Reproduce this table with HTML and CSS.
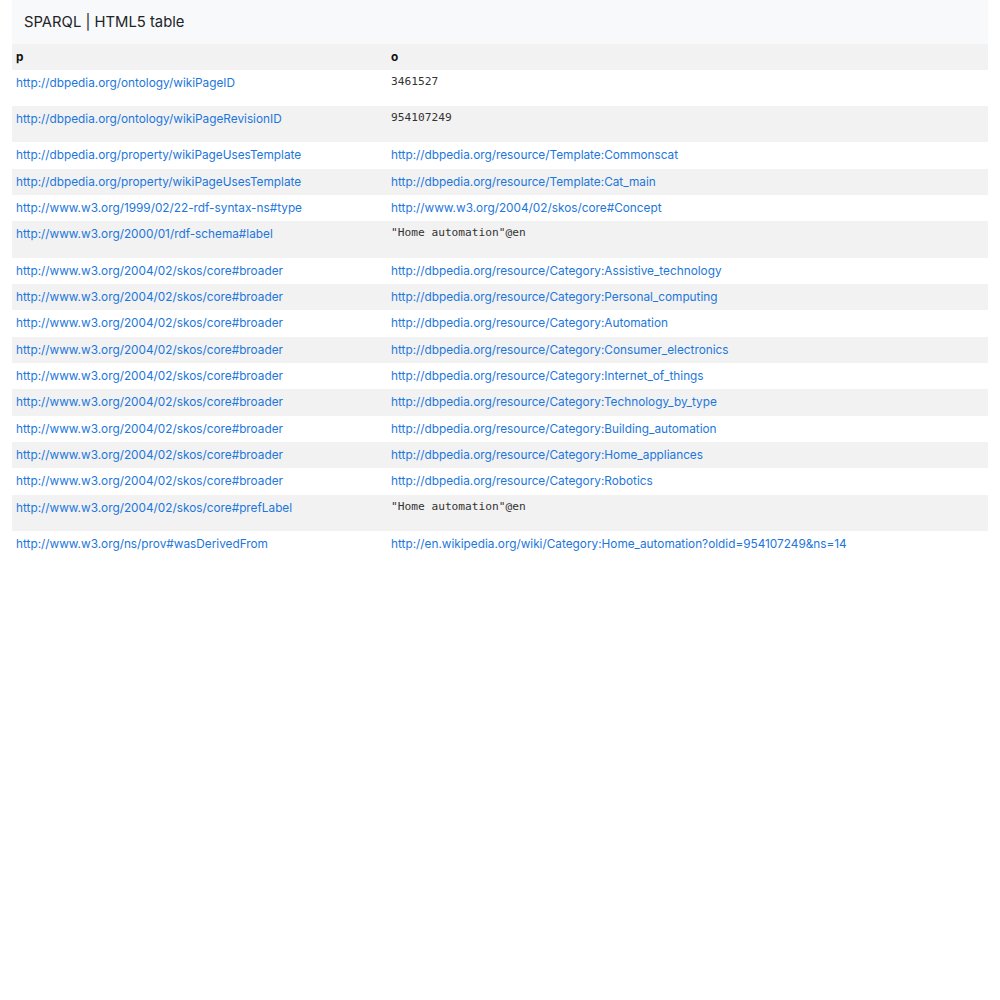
FILE: index.html
```html
<!DOCTYPE html>
<html lang="en">
<head>
  <meta charset="UTF-8" />
  <title>SPARQL | HTML5 table</title>
  <link rel="stylesheet" href="styles.css">
</head>
<body>
  <div class="container">
    <header class="title-bar">
      <h1>SPARQL | HTML5 table</h1>
    </header>
    <table class="results">
      <thead>
        <tr><th class="col-p">p</th><th>o</th></tr>
      </thead>
      <tbody>
        <tr><td><a href="#">http://dbpedia.org/ontology/wikiPageID</a></td><td><pre>3461527</pre></td></tr>
        <tr><td><a href="#">http://dbpedia.org/ontology/wikiPageRevisionID</a></td><td><pre>954107249</pre></td></tr>
        <tr><td><a href="#">http://dbpedia.org/property/wikiPageUsesTemplate</a></td><td><a href="#">http://dbpedia.org/resource/Template:Commonscat</a></td></tr>
        <tr><td><a href="#">http://dbpedia.org/property/wikiPageUsesTemplate</a></td><td><a href="#">http://dbpedia.org/resource/Template:Cat_main</a></td></tr>
        <tr><td><a href="#">http://www.w3.org/1999/02/22-rdf-syntax-ns#type</a></td><td><a href="#">http://www.w3.org/2004/02/skos/core#Concept</a></td></tr>
        <tr><td><a href="#">http://www.w3.org/2000/01/rdf-schema#label</a></td><td><pre>"Home automation"@en</pre></td></tr>
        <tr><td><a href="#">http://www.w3.org/2004/02/skos/core#broader</a></td><td><a href="#">http://dbpedia.org/resource/Category:Assistive_technology</a></td></tr>
        <tr><td><a href="#">http://www.w3.org/2004/02/skos/core#broader</a></td><td><a href="#">http://dbpedia.org/resource/Category:Personal_computing</a></td></tr>
        <tr><td><a href="#">http://www.w3.org/2004/02/skos/core#broader</a></td><td><a href="#">http://dbpedia.org/resource/Category:Automation</a></td></tr>
        <tr><td><a href="#">http://www.w3.org/2004/02/skos/core#broader</a></td><td><a href="#">http://dbpedia.org/resource/Category:Consumer_electronics</a></td></tr>
        <tr><td><a href="#">http://www.w3.org/2004/02/skos/core#broader</a></td><td><a href="#">http://dbpedia.org/resource/Category:Internet_of_things</a></td></tr>
        <tr><td><a href="#">http://www.w3.org/2004/02/skos/core#broader</a></td><td><a href="#">http://dbpedia.org/resource/Category:Technology_by_type</a></td></tr>
        <tr><td><a href="#">http://www.w3.org/2004/02/skos/core#broader</a></td><td><a href="#">http://dbpedia.org/resource/Category:Building_automation</a></td></tr>
        <tr><td><a href="#">http://www.w3.org/2004/02/skos/core#broader</a></td><td><a href="#">http://dbpedia.org/resource/Category:Home_appliances</a></td></tr>
        <tr><td><a href="#">http://www.w3.org/2004/02/skos/core#broader</a></td><td><a href="#">http://dbpedia.org/resource/Category:Robotics</a></td></tr>
        <tr><td><a href="#">http://www.w3.org/2004/02/skos/core#prefLabel</a></td><td><pre>"Home automation"@en</pre></td></tr>
        <tr><td><a href="#">http://www.w3.org/ns/prov#wasDerivedFrom</a></td><td><a href="#">http://en.wikipedia.org/wiki/Category:Home_automation?oldid=954107249&amp;ns=14</a></td></tr>
      </tbody>
    </table>
  </div>
</body>
</html>
```

FILE: styles.css
```css
body {
  margin: 0;
  font-family: Inter, 'Liberation Sans', sans-serif;
  font-size: 11.8px;
  color: #212529;
  background: #fff;
}
.container {
  margin: 0 12px;
}
.title-bar {
  background: #f8f9fa;
  padding: 0 12px;
  height: 44px;
  display: flex;
  align-items: center;
}
.title-bar h1 {
  margin: 0;
  font-size: 14.8px;
  font-weight: 400;
  color: #212529;
}
.results {
  width: 100%;
  border-collapse: collapse;
}
.results th,
.results td {
  text-align: left;
  vertical-align: top;
  padding: 4px;
  line-height: 18.33px;
}
.results th {
  background: #f2f2f2;
  font-weight: 700;
  color: #111;
  line-height: 18px;
}
.results .col-p {
  width: 367px;
}
.results tbody tr:nth-child(even) {
  background: #f2f2f2;
}
a {
  color: #1c76dc;
  text-decoration: none;
}
pre {
  margin: 0 0 12.2px 0;
  font-family: 'DejaVu Sans Mono', monospace;
  font-size: 11.2px;
  line-height: 16px;
  color: #333;
}
```
